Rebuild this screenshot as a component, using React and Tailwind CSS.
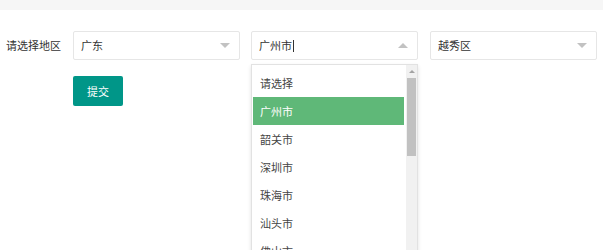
const CITIES = ["请选择", "广州市", "韶关市", "深圳市", "珠海市", "汕头市", "佛山市"];

function Arrow({ up }) {
  return (
    <span
      className={
        "h-0 w-0 border-x-[5px] border-x-transparent " +
        (up ? "border-b-[5px] border-b-[#c2c2c2]" : "border-t-[5px] border-t-[#c2c2c2]")
      }
    />
  );
}

function Select({ value, up, cursor, children }) {
  return (
    <div className="relative w-[167px]">
      <div className="flex h-[29px] items-center justify-between rounded-[2px] border border-[#e6e6e6] bg-white pl-[7px] pr-[9px] text-[11px] text-[#333]">
        <span>
          {value}
          {cursor && <span className="ml-px inline-block h-[12px] w-px translate-y-[2px] bg-[#333]" />}
        </span>
        <Arrow up={up} />
      </div>
      {children}
    </div>
  );
}

export default function App() {
  return (
    <div
      className="h-[250px] overflow-hidden bg-white"
      style={{ fontFamily: '"Noto Sans CJK SC", "Noto Sans", sans-serif' }}
    >
      <div className="h-[10px] bg-[#f6f6f6]" />
      <div className="pt-[21px]">
        <div className="flex items-center">
          <div className="w-[73px] pl-[6px] text-[11px] text-[#333]">请选择地区</div>
          <Select value="广东" />
          <div className="w-[11px]" />
          <Select value="广州市" up cursor>
            <div className="absolute left-0 top-[33px] z-10 h-[200px] w-[167px] border border-[#e2e2e2] bg-white shadow-[0_2px_4px_rgba(0,0,0,0.12)]">
              <div className="flex h-full">
                <div className="flex-1 pl-px pt-[4px]">
                  {CITIES.map((c) => (
                    <div
                      key={c}
                      className={
                        "flex h-[28px] items-center pl-[7px] text-[11px] " +
                        (c === "广州市" ? "bg-[#5fb878] text-white" : "text-[#444]")
                      }
                    >
                      {c}
                    </div>
                  ))}
                </div>
                <div className="ml-[2px] flex w-[11px] flex-col items-center bg-[#f1f1f1]">
                  <div className="flex h-[13px] items-center">
                    <span className="h-0 w-0 border-x-[3px] border-b-[3px] border-x-transparent border-b-[#a3a3a3]" />
                  </div>
                  <div className="h-[78px] w-[9px] bg-[#c1c1c1]" />
                </div>
              </div>
            </div>
          </Select>
          <div className="w-[12px]" />
          <Select value="越秀区" />
        </div>
        <div className="ml-[73px] mt-[16px]">
          <button
            type="button"
            className="h-[30px] w-[50px] rounded-[2px] bg-[#009688] text-[11px] text-white"
          >
            提交
          </button>
        </div>
      </div>
    </div>
  );
}
